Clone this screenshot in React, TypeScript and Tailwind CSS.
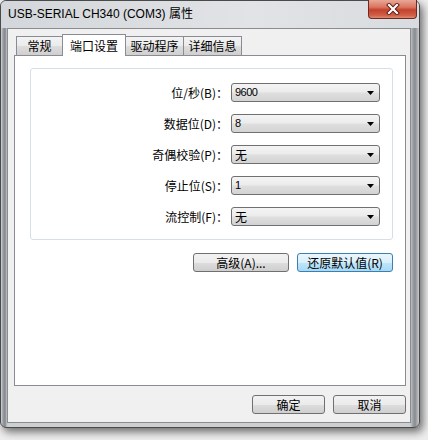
import React from 'react';

const CJK = "font-['Noto_Sans_CJK_SC','Noto_Sans',sans-serif]";

const rows = [
  { label: '位/秒(B)：', value: '9600' },
  { label: '数据位(D)：', value: '8' },
  { label: '奇偶校验(P)：', value: '无' },
  { label: '停止位(S)：', value: '1' },
  { label: '流控制(F)：', value: '无' },
];

function Combo({ value }: { value: string }) {
  const isDigit = /^[0-9]+$/.test(value);
  return (
    <div className="ml-[3px] flex h-[19px] w-[149px] items-center justify-between rounded-[3px] border border-[#707070] bg-[linear-gradient(to_bottom,#f4f4f4_0%,#ececec_45%,#dedede_55%,#d3d3d3_100%)] pl-[3px] pr-[5px]">
      <span
        className={
          isDigit
            ? "font-['Liberation_Sans',sans-serif] text-[11px] tracking-[-0.5px] leading-none text-black"
            : `${CJK} text-[12px] leading-none text-black`
        }
      >
        {value}
      </span>
      <svg width="7" height="4" viewBox="0 0 7 4">
        <polygon points="0,0 7,0 3.5,4" fill="#000" />
      </svg>
    </div>
  );
}

function Button({ children, width, primary }: { children: React.ReactNode; width: string; primary?: boolean }) {
  return (
    <div
      className={`flex h-[19px] ${width} items-center justify-center rounded-[3px] border ${
        primary
          ? 'border-[#3c7fb1] bg-[linear-gradient(to_bottom,#eaf6fd_0%,#d9f0fc_50%,#bee6fd_51%,#a7d9f5_100%)]'
          : 'border-[#707070] bg-[linear-gradient(to_bottom,#f2f2f2_0%,#ebebeb_50%,#dddddd_51%,#cfcfcf_100%)]'
      } ${CJK} text-[12px] leading-none text-black`}
    >
      {children}
    </div>
  );
}

function Tab({ label, width, active }: { label: string; width: string; active?: boolean }) {
  if (active) {
    return (
      <div
        className={`relative z-10 -mb-px -ml-px flex h-[22px] ${width} items-start justify-center border border-b-0 border-[#898c95] bg-white pt-[2px] ${CJK} text-[12px] text-black`}
      >
        {label}
      </div>
    );
  }
  return (
    <div
      className={`-ml-px flex h-[19px] ${width} items-center justify-center border border-b-0 border-[#898c95] bg-[linear-gradient(to_bottom,#f3f3f3_0%,#ebebeb_50%,#dddddd_51%,#cfcfcf_100%)] ${CJK} text-[12px] text-black first:ml-0`}
    >
      {label}
    </div>
  );
}

export default function App() {
  return (
    <div className="h-[440px] w-[428px] overflow-hidden bg-[#eeeeee]">
      <div className="flex h-[428px] w-[420px] flex-col rounded-[6px] border border-[#4a4a4a] bg-[linear-gradient(to_right,#d4d6d9_0px,#9a9da1_2px,#84878b_4px,#c4c6c9_6px,#cdd0d3_8px,#cdd0d3_calc(100%-9px),#9b9ea2_calc(100%-6px),#888b8f_calc(100%-4px),#c9cbce_100%)] shadow-[3px_4px_8px_rgba(0,0,0,0.55)]">
        {/* title bar */}
        <div className="flex h-[27px] shrink-0 items-start rounded-t-[5px] bg-[linear-gradient(to_right,#d3d6da,#e1e3e6_60%,#d8dbdf)]">
          <div className="flex-1 pl-[7px] pt-[6px] font-['Liberation_Sans','Noto_Sans_CJK_SC',sans-serif] text-[12px] leading-[15px] text-black">
            USB-SERIAL CH340 (COM3) 属性
          </div>
          <div className="-mt-px mr-[2px] flex h-[19px] w-[49px] items-center justify-center rounded-b-[4px] border border-t-0 border-[#6e2a20] bg-[linear-gradient(to_bottom,#e9a897_0%,#d9745f_40%,#c4412b_55%,#cf5f48_85%,#e08a72_100%)]">
            <svg width="14" height="12" viewBox="0 0 14 12">
              <path d="M3 2 L11 10 M11 2 L3 10" stroke="#5a1a10" strokeWidth="4" strokeLinecap="square" />
              <path d="M3 2 L11 10 M11 2 L3 10" stroke="#ffffff" strokeWidth="2.2" strokeLinecap="square" />
            </svg>
          </div>
        </div>

        {/* frame body */}
        <div className="flex flex-1 pb-[4px] pl-[6px] pr-[8px]">
          <div className="flex flex-1 flex-col border border-[#8a8c8f] bg-[#f0f0f0]">
            <div className="flex flex-col pl-[6px] pr-[4px] pt-[5px]">
              {/* tabs */}
              <div className="flex h-[21px] items-end pl-[2px]">
                <Tab label="常规" width="w-[47px]" />
                <Tab label="端口设置" width="w-[64px]" active />
                <Tab label="驱动程序" width="w-[59px]" />
                <Tab label="详细信息" width="w-[59px]" />
              </div>

              {/* panel */}
              <div className="flex h-[331px] flex-col border border-[#898c95] bg-white pl-[15px] pr-[12px] pt-[12px]">
                <div className="flex h-[172px] flex-col gap-[12px] rounded-[3px] border border-[#d5dfe5] pt-[14px]">
                  {rows.map((r) => (
                    <div key={r.label} className="flex h-[19px] items-center">
                      <span className={`w-[197px] text-right ${CJK} text-[12px] leading-none text-black`}>{r.label}</span>
                      <Combo value={r.value} />
                    </div>
                  ))}
                </div>
                <div className="mt-[13px] flex justify-end gap-[8px]">
                  <Button width="w-[96px]">高级(A)...</Button>
                  <Button width="w-[96px]" primary>
                    还原默认值(R)
                  </Button>
                </div>
              </div>

              {/* dialog buttons */}
              <div className="mt-[9px] flex justify-end gap-[8px]">
                <Button width="w-[73px]">确定</Button>
                <Button width="w-[73px]">取消</Button>
              </div>
            </div>
          </div>
        </div>
      </div>
    </div>
  );
}
